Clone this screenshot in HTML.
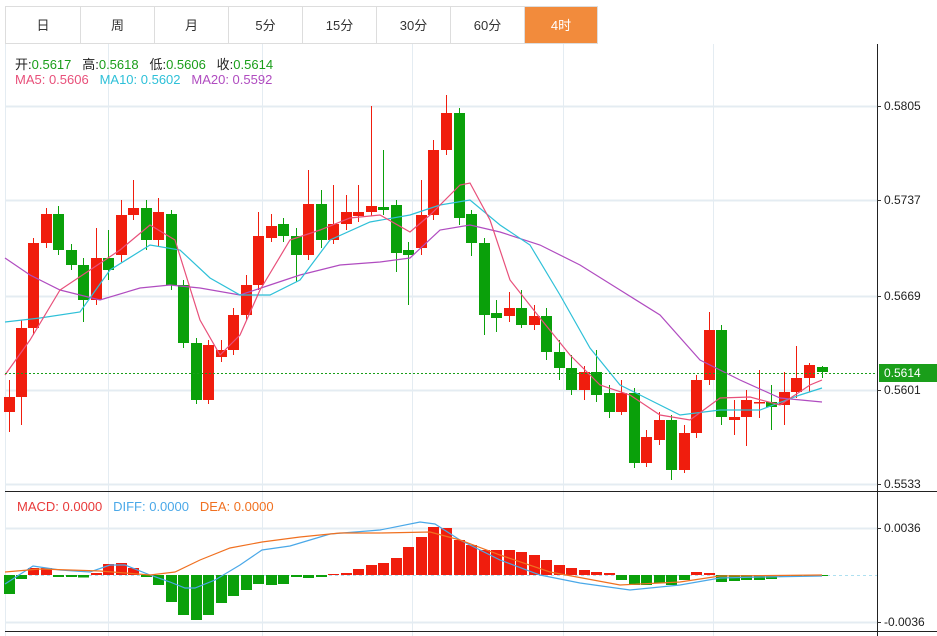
<!DOCTYPE html>
<html><head><meta charset="utf-8"><style>
body{margin:0;width:937px;height:636px;background:#fff;font-family:"Liberation Sans","Noto Sans CJK SC",sans-serif;overflow:hidden;position:relative}
.tabs{position:absolute;left:5px;top:6px;height:38px;display:flex;border:1px solid #ddd;border-right:none;box-sizing:border-box}
.tabs div{width:73px;border-right:1px solid #ddd;text-align:center;line-height:37px;font-size:13px;color:#333}
.tabs div:first-child{width:74px}
.tabs div.on{background:#f28b3c;color:#fff;width:72px}
.lg{position:absolute;font-size:13px;white-space:nowrap}
</style></head><body>
<div class="tabs"><div>日</div><div>周</div><div>月</div><div>5分</div><div>15分</div><div>30分</div><div>60分</div><div class="on">4时</div></div>
<svg id="s" width="937" height="636" style="position:absolute;left:0;top:0"></svg>
<div class="lg" style="left:15px;top:54px;color:#222">开:<span style="color:#1a9e1a">0.5617</span>&nbsp;&nbsp;&nbsp;高:<span style="color:#1a9e1a">0.5618</span>&nbsp;&nbsp;&nbsp;低:<span style="color:#1a9e1a">0.5606</span>&nbsp;&nbsp;&nbsp;收:<span style="color:#1a9e1a">0.5614</span></div>
<div class="lg" style="left:15px;top:72px"><span style="color:#e8507a">MA5: 0.5606</span>&nbsp;&nbsp;&nbsp;<span style="color:#2ec0d8">MA10: 0.5602</span>&nbsp;&nbsp;&nbsp;<span style="color:#b04cc0">MA20: 0.5592</span></div>
<div class="lg" style="left:17px;top:499px"><span style="color:#e83a3a">MACD: 0.0000</span>&nbsp;&nbsp;&nbsp;<span style="color:#4aa8e8">DIFF: 0.0000</span>&nbsp;&nbsp;&nbsp;<span style="color:#f07020">DEA: 0.0000</span></div>
<script>
var s='';
function L(x1,y1,x2,y2,c,w,d){s+='<line x1="'+x1+'" y1="'+y1+'" x2="'+x2+'" y2="'+y2+'" stroke="'+c+'" stroke-width="'+(w||1)+'"'+(d?' stroke-dasharray="'+d+'"':'')+'/>';}
var G='#e4ecf2';
[106,200,296,390,484,528,622].forEach(function(y){L(5,y+.5,877,y+.5,G,2)});
[108,262,412,563,713].forEach(function(x){L(x+.5,44,x+.5,636,G,1)});
L(5.5,44,5.5,636,G,1);
L(877.5,44,877.5,636,'#222',1);L(5,491.5,937,491.5,'#222',1);L(5,631.5,937,631.5,'#222',1);
var ax=[[106,'0.5805'],[200,'0.5737'],[296,'0.5669'],[390,'0.5601'],[484,'0.5533'],[528,'0.0036'],[622,'-0.0036']];
ax.forEach(function(a){L(877,a[0]+.5,881,a[0]+.5,'#333');s+='<text x="884" y="'+(a[0]+4)+'" font-size="12" fill="#222">'+a[1]+'</text>'});
var c=[[9,412,397,380,432],[21,397,328,320,425],[33,328,243,238,335],[46,243,214,208,248],[58,214,250,206,255],[71,250,265,244,270],[83,265,300,258,322],[96,300,258,228,305],[108,258,270,230,280],[121,255,215,200,262],[133,215,208,180,220],[146,208,240,200,250],[158,240,212,198,246],[171,214,285,210,290],[183,285,343,280,348],[196,343,400,338,404],[208,400,345,340,404],[221,357,350,340,362],[233,350,315,308,355],[246,315,285,275,320],[258,285,236,212,290],[271,238,226,214,242],[283,224,236,218,242],[296,236,255,228,282],[308,255,204,170,260],[321,204,240,190,248],[333,240,224,185,244],[346,224,212,195,230],[358,216,212,185,222],[371,212,206,106,216],[383,207,210,150,215],[396,205,253,200,272],[408,250,255,242,305],[421,248,215,180,255],[433,215,150,140,220],[446,150,113,95,155],[459,113,218,108,225],[471,214,243,210,256],[484,243,315,238,335],[496,313,318,300,332],[509,316,308,292,322],[521,308,325,290,328],[534,325,316,305,330],[546,316,352,308,360],[559,352,368,340,380],[571,368,390,355,395],[584,390,372,366,400],[596,372,395,350,402],[609,393,412,385,418],[621,412,393,380,415],[634,393,463,388,468],[646,463,437,430,467],[659,440,420,412,445],[671,420,470,415,480],[684,470,433,425,473],[696,433,380,375,438],[709,380,330,312,385],[721,330,417,325,425],[734,420,417,400,435],[746,417,400,390,446],[759,403,402,370,418],[771,402,407,385,430],[784,405,392,372,425],[796,392,378,346,398],[809,378,365,363,392],[822,367,372,366,378]];
c.forEach(function(k){var up=k[2]<=k[1];var col=up?'#f01d0d':'#0aa00a';L(k[0]+.5,k[3],k[0]+.5,k[4],col);var t=Math.min(k[1],k[2]),h=Math.max(Math.abs(k[1]-k[2]),1.5);s+='<rect x="'+(k[0]-5)+'" y="'+t+'" width="11" height="'+h+'" fill="'+col+'"/>';});
function P(pts,col){s+='<polyline fill="none" stroke="'+col+'" stroke-width="1.2" points="'+pts.map(function(p){return p.join(',')}).join(' ')+'"/>';}
P([[5,258],[30,275],[60,290],[100,300],[140,288],[170,285],[200,288],[240,295],[270,285],[300,275],[340,265],[380,262],[410,258],[440,230],[470,225],[500,232],[540,245],[580,265],[620,290],[660,315],[700,360],[740,380],[780,398],[822,402]],'#b04cc0');
P([[5,322],[40,318],[80,312],[110,270],[150,245],[180,250],[210,278],[240,295],[270,295],[300,280],[330,240],[370,222],[410,215],[440,205],[470,200],[500,225],[530,245],[560,295],[590,348],[620,385],[650,400],[680,415],[720,410],[760,410],[800,395],[822,388]],'#2ec0d8');
P([[5,375],[30,340],[60,290],[90,270],[120,250],[150,225],[175,240],[200,320],[220,355],[240,335],[260,290],[290,240],[320,230],[350,218],[380,215],[410,232],[430,215],[460,185],[470,183],[490,220],[510,280],[540,318],[570,355],[600,385],[630,395],[660,415],[690,420],[720,398],[750,397],[780,405],[810,385],[822,380]],'#e8507a');
L(5,373.5,877,373.5,'#1a9e1a',1,'2,2');
s+='<rect x="879" y="364" width="58" height="18" fill="#1a9e1a"/><text x="884" y="377" font-size="12" fill="#fff">0.5614</text>';
L(5,575.5,877,575.5,'#aee0f0',1,'3,3');
var m=[594,579,568,568,577,577,577.5,573,564,563,568,577,585,602,615,620,615,603,596,590,584,585,584,577,578,577,574,573,569,565,563,558,547,537,527,528,540,545,550,550,550,552,555,560,565,568,570,572,573,580,585,585,583,585,580,572,573,582,581,580,580,579,577,575.5,575.5,575.5];
m.forEach(function(y,i){var x=c[i][0];var col=y<575?'#f01d0d':'#0aa00a';var t=Math.min(y,575),h=Math.max(Math.abs(y-575),1);s+='<rect x="'+(x-5)+'" y="'+t+'" width="11" height="'+h+'" fill="'+col+'"/>';});
P([[5,584],[33,566],[60,570],[90,572],[110,565],[125,565],[150,575],[170,582],[185,588],[195,588],[215,580],[240,565],[262,550],[290,546],[310,540],[330,534],[380,530],[420,522],[435,524],[460,540],[500,560],[540,575],[580,583],[630,590],[680,585],[720,578],[760,577],[822,576]],'#4aa8e8');
P([[5,572],[40,569],[100,571],[150,575],[175,572],[200,560],[230,548],[262,542],[300,537],[340,533],[380,533],[430,532],[460,540],[500,555],[550,572],[620,585],[680,582],[720,576],[822,575]],'#f07020');
document.getElementById('s').innerHTML=s;
</script>
</body></html>
